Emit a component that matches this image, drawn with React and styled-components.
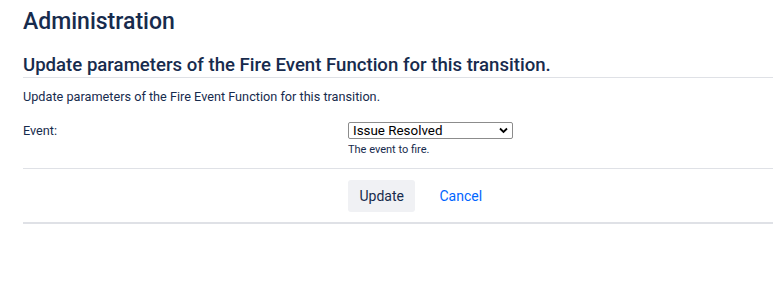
import React from "react";
import styled, { createGlobalStyle } from "styled-components";

const GlobalStyle = createGlobalStyle`
  body {
    margin: 0;
    background: #ffffff;
    font-family: Roboto, "Liberation Sans", sans-serif;
    color: #172b4d;
  }
`;

const Page = styled.div`
  padding: 7px 0 0 23px;
`;

const Title = styled.h1`
  margin: 0;
  font-size: 23px;
  line-height: 30px;
  font-weight: 500;
`;

const FormHeader = styled.h2`
  margin: 17px 0 0;
  padding: 0;
  font-size: 18.6px;
  line-height: 23px;
  font-weight: 500;
  border-bottom: 1px solid #dfe1e6;
`;

const Description = styled.p`
  margin: 10px 0 0;
  font-size: 12.7px;
  line-height: 18px;
`;

const FieldRow = styled.div`
  display: grid;
  grid-template-columns: 325px 1fr;
  padding: 16px 0 11px;
  border-bottom: 1px solid #dfe1e6;
`;

const Label = styled.label`
  font-size: 12.7px;
  line-height: 17px;
`;

const Field = styled.div`
  display: flex;
  flex-direction: column;
`;

const SelectWrap = styled.div`
  position: relative;
  width: 165px;
`;

const Select = styled.select`
  display: block;
  appearance: none;
  width: 165px;
  height: 17px;
  margin: 0;
  padding: 0 20px 0 4px;
  font-family: inherit;
  font-size: 13.4px;
  line-height: 15px;
  color: #000;
  background: #fff;
  border: 1px solid #8c8c8c;
  border-radius: 2px;
`;

const Chevron = styled.svg`
  position: absolute;
  right: 5px;
  top: 5px;
  width: 9px;
  height: 7px;
  pointer-events: none;
`;

const Help = styled.div`
  margin-top: 4px;
  font-size: 11px;
  line-height: 14px;
  color: #172b4d;
`;

const Actions = styled.div`
  display: flex;
  align-items: center;
  gap: 10px;
  padding: 11px 0 10px 325px;
  border-bottom: 2px solid #dfe1e6;
`;

const Button = styled.button`
  height: 32px;
  padding: 0 ${(p) => (p.$link ? "14px" : "11.5px")};
  font-family: inherit;
  font-size: 14px;
  color: ${(p) => (p.$link ? "#0065ff" : "#172b4d")};
  background: ${(p) => (p.$link ? "transparent" : "#f0f1f4")};
  border: none;
  border-radius: 3px;
  cursor: pointer;
`;

export default function App() {
  return (
    <>
      <GlobalStyle />
      <Page>
        <Title>Administration</Title>
        <FormHeader>Update parameters of the Fire Event Function for this transition.</FormHeader>
        <Description>Update parameters of the Fire Event Function for this transition.</Description>
        <FieldRow>
          <Label htmlFor="event">Event:</Label>
          <Field>
            <SelectWrap>
              <Select id="event" defaultValue="resolved">
                <option value="resolved">Issue Resolved</option>
              </Select>
              <Chevron viewBox="0 0 9 7">
                <path d="M1 1.5 L4.5 5 L8 1.5" fill="none" stroke="#000" strokeWidth="1.8" />
              </Chevron>
            </SelectWrap>
            <Help>The event to fire.</Help>
          </Field>
        </FieldRow>
        <Actions>
          <Button>Update</Button>
          <Button $link>Cancel</Button>
        </Actions>
      </Page>
    </>
  );
}
